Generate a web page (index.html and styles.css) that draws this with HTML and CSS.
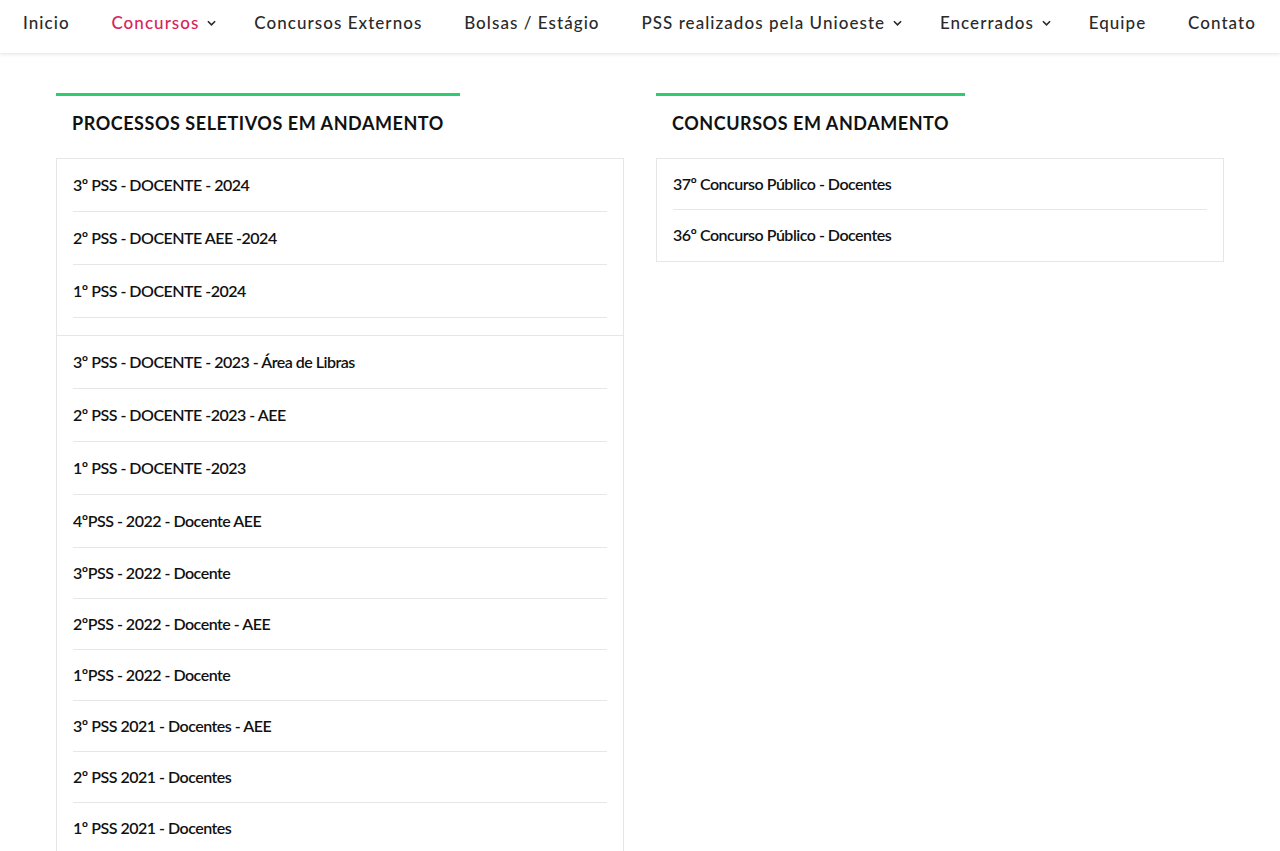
FILE: index.html
```html
<!DOCTYPE html>
<html lang="pt-BR">
<head>
<meta charset="utf-8">
<title>Concursos</title>
<link rel="stylesheet" href="styles.css">
</head>
<body>
<nav class="topnav">
  <a class="nav-item" href="#">Inicio</a>
  <a class="nav-item active" href="#">Concursos<span class="caret"><svg viewBox="0 0 10 6" width="9" height="6"><path d="M1 1l4 4 4-4" fill="none" stroke="currentColor" stroke-width="1.8"/></svg></span></a>
  <a class="nav-item" href="#">Concursos Externos</a>
  <a class="nav-item" href="#">Bolsas / Estágio</a>
  <a class="nav-item" href="#">PSS realizados pela Unioeste<span class="caret"><svg viewBox="0 0 10 6" width="9" height="6"><path d="M1 1l4 4 4-4" fill="none" stroke="currentColor" stroke-width="1.8"/></svg></span></a>
  <a class="nav-item" href="#">Encerrados<span class="caret"><svg viewBox="0 0 10 6" width="9" height="6"><path d="M1 1l4 4 4-4" fill="none" stroke="currentColor" stroke-width="1.8"/></svg></span></a>
  <a class="nav-item" href="#">Equipe</a>
  <a class="nav-item" href="#">Contato</a>
</nav>

<main class="content">
  <section class="column">
    <h2 class="section-title">PROCESSOS SELETIVOS EM ANDAMENTO</h2>
    <div class="list-box">
      <a class="list-item" href="#">3º PSS - DOCENTE - 2024</a>
      <a class="list-item" href="#">2º PSS - DOCENTE AEE -2024</a>
      <a class="list-item" href="#">1º PSS - DOCENTE -2024</a>
    </div>
    <div class="list-box list-box-joined">
      <a class="list-item" href="#">3º PSS - DOCENTE - 2023 - Área de Libras</a>
      <a class="list-item" href="#">2º PSS - DOCENTE -2023 - AEE</a>
      <a class="list-item" href="#">1º PSS - DOCENTE -2023</a>
      <a class="list-item" href="#">4ºPSS - 2022 - Docente AEE</a>
      <a class="list-item short" href="#">3ºPSS - 2022 - Docente</a>
      <a class="list-item short" href="#">2ºPSS - 2022 - Docente - AEE</a>
      <a class="list-item short" href="#">1ºPSS - 2022 - Docente</a>
      <a class="list-item short" href="#">3º PSS 2021 - Docentes - AEE</a>
      <a class="list-item short" href="#">2º PSS 2021 - Docentes</a>
      <a class="list-item short" href="#">1º PSS 2021 - Docentes</a>
    </div>
  </section>
  <section class="column">
    <h2 class="section-title">CONCURSOS EM ANDAMENTO</h2>
    <div class="list-box list-box-tight">
      <a class="list-item short" href="#">37º Concurso Público - Docentes</a>
      <a class="list-item short" href="#">36º Concurso Público - Docentes</a>
    </div>
  </section>
</main>
</body>
</html>
```

FILE: styles.css
```css
* { box-sizing: border-box; }

html, body {
  margin: 0;
  padding: 0;
  background: #ffffff;
  font-family: Lato, "Open Sans", "Liberation Sans", sans-serif;
  color: #111111;
}

a { text-decoration: none; color: inherit; }

.topnav {
  display: flex;
  justify-content: space-between;
  align-items: center;
  height: 53px;
  padding: 0 24px 8px 23px;
  background: #fff;
  box-shadow: 0 1px 4px rgba(0, 0, 0, 0.12);
  position: relative;
  z-index: 2;
}

.nav-item {
  display: flex;
  align-items: center;
  font-size: 17px;
  font-weight: 500;
  letter-spacing: 1.05px;
  color: #2a2a2a;
  line-height: 20px;
}

.nav-item.active { color: #d6245c; }

.caret {
  display: inline-flex;
  margin-left: 8px;
  margin-right: -4px;
  color: #2a2a2a;
}

.content {
  display: grid;
  grid-template-columns: 1fr 1fr;
  column-gap: 32px;
  padding: 40px 56px 0 56px;
  align-items: start;
}

.section-title {
  display: inline-block;
  margin: 0;
  padding: 14px 16px 0 16px;
  border-top: 3px solid #2ecc71;
  font-size: 18px;
  font-weight: 700;
  letter-spacing: 0.55px;
  line-height: 26px;
  color: #111111;
}

.list-box {
  margin-top: 22px;
  border: 1px solid #e6e6e6;
  padding: 0 16px 17px 16px;
}

.list-box-joined {
  margin-top: -1px;
  padding-bottom: 0;
}

.list-box-tight { padding-bottom: 0; }

.list-item {
  display: flex;
  align-items: center;
  height: 53px;
  padding-bottom: 2px;
  border-bottom: 1px solid #e6e6e6;
  font-size: 16px;
  font-weight: 600;
  letter-spacing: -0.5px;
  color: #111111;
}

.list-item.short { height: 51px; }

.list-box-tight .list-item:last-child { border-bottom: 0; }
```
